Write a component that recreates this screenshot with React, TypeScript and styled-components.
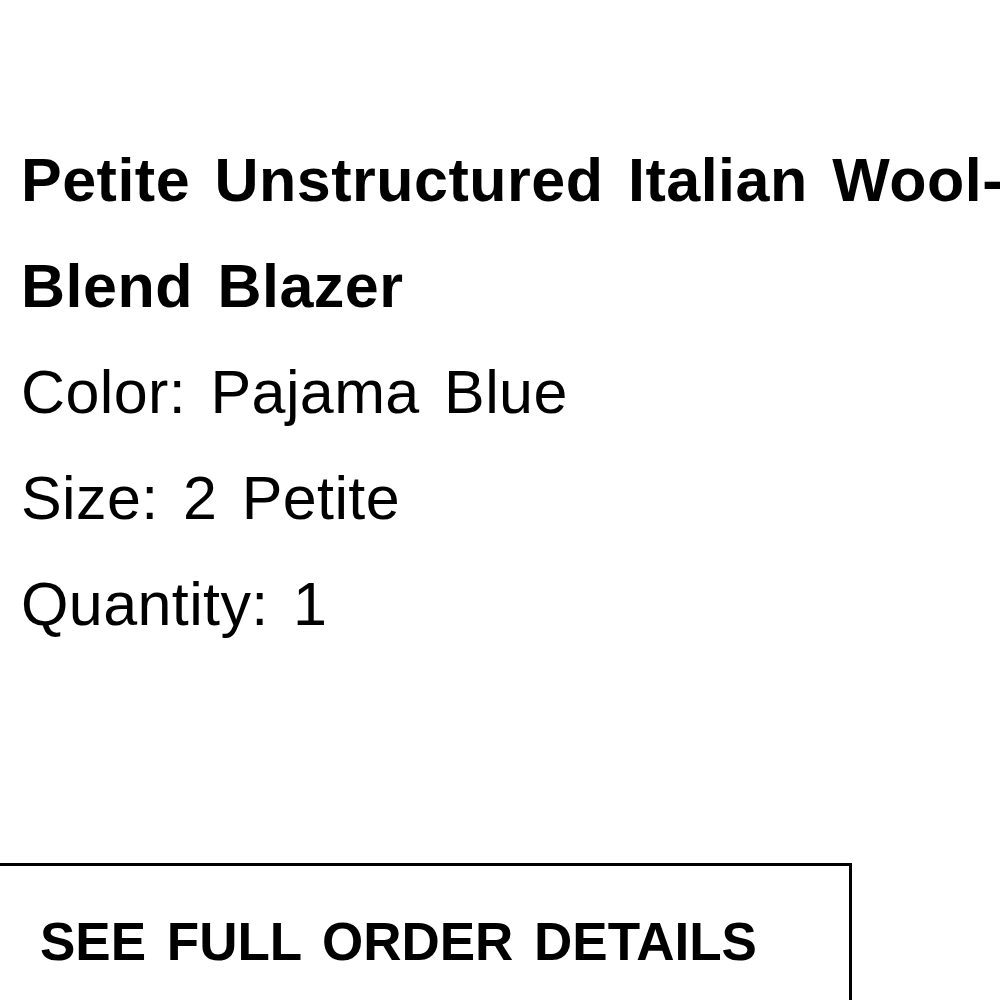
import React from "react";
import styled, { createGlobalStyle } from "styled-components";

// ======== ESTILOS ========
const GlobalStyle = createGlobalStyle`
  html, body {
    margin: 0;
    padding: 0;
    background: #fff;
    overflow: hidden;
  }
  body {
    font-family: "Liberation Sans", Arial, Helvetica, sans-serif;
    color: #000;
  }
`;

const Page = styled.div`
  width: 1000px;
  height: 1000px;
  padding: 127px 0 0 21px;
  box-sizing: border-box;
  overflow: hidden;
`;

const ItemTitle = styled.h2`
  margin: 0;
  font-size: 61px;
  font-weight: 700;
  line-height: 106px;
  letter-spacing: 0.5px;
  word-spacing: 7px;
  white-space: nowrap;
`;

const Detail = styled.p`
  margin: 0;
  font-size: 61px;
  font-weight: 400;
  line-height: 106px;
  letter-spacing: 0.4px;
  word-spacing: 7px;
`;

const OrderButton = styled.a`
  display: block;
  box-sizing: border-box;
  width: 872px;
  margin: 206px 0 0 -41px;
  padding: 49px 0 60px 57px;
  border: 3px solid #000;
  font-size: 53px;
  font-weight: 700;
  line-height: 1;
  word-spacing: 6px;
  color: #000;
  text-decoration: none;
  text-transform: uppercase;
`;

// ======== COMPONENTE ========
interface Item {
  name: string[];
  color: string;
  size: string;
  quantity: number;
}

const item: Item = {
  name: ["Petite Unstructured Italian Wool-", "Blend Blazer"],
  color: "Pajama Blue",
  size: "2 Petite",
  quantity: 1,
};

const App: React.FC = () => {
  return (
    <>
      <GlobalStyle />
      <Page>
        <ItemTitle>
          {item.name[0]}
          <br />
          {item.name[1]}
        </ItemTitle>
        <Detail>Color: {item.color}</Detail>
        <Detail>Size: {item.size}</Detail>
        <Detail>Quantity: {item.quantity}</Detail>
        <OrderButton href="#">See full order details</OrderButton>
      </Page>
    </>
  );
};

export default App;
